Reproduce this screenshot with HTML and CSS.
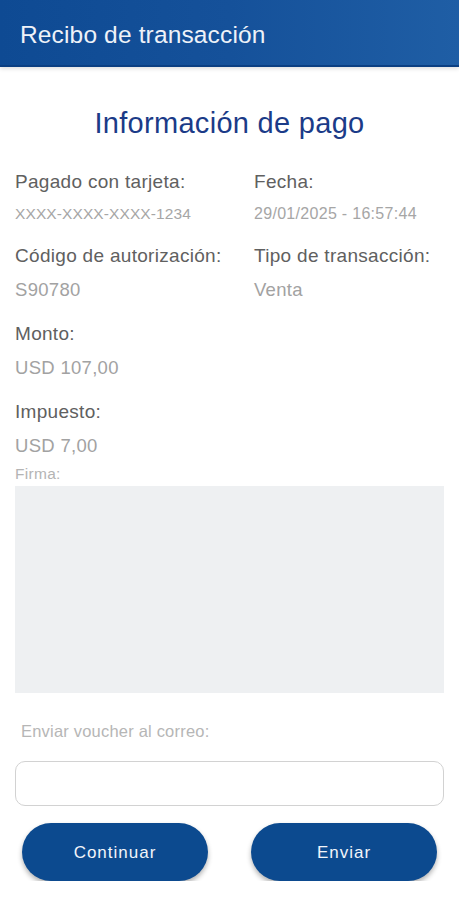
FILE: index.html
```html
<!DOCTYPE html>
<html lang="es">
<head>
<meta charset="utf-8">
<title>Recibo de transacción</title>
<link rel="stylesheet" href="styles.css">
</head>
<body>
<header class="appbar">
  <h1 class="appbar-title">Recibo de transacción</h1>
</header>
<main class="content">
  <h2 class="heading">Información de pago</h2>
  <section class="fields">
    <div class="field">
      <div class="label">Pagado con tarjeta:</div>
      <div class="value small">XXXX-XXXX-XXXX-1234</div>
    </div>
    <div class="field">
      <div class="label">Fecha:</div>
      <div class="value small date">29/01/2025 - 16:57:44</div>
    </div>
    <div class="field">
      <div class="label">Código de autorización:</div>
      <div class="value">S90780</div>
    </div>
    <div class="field">
      <div class="label">Tipo de transacción:</div>
      <div class="value">Venta</div>
    </div>
    <div class="field full">
      <div class="label">Monto:</div>
      <div class="value">USD 107,00</div>
    </div>
    <div class="field full">
      <div class="label">Impuesto:</div>
      <div class="value">USD 7,00</div>
    </div>
  </section>
  <div class="firma-label">Firma:</div>
  <div class="firma-box"></div>
  <div class="mail-label">Enviar voucher al correo:</div>
  <input class="mail-input" type="email" aria-label="Correo">
  <div class="actions">
    <button class="btn">Continuar</button>
    <button class="btn">Enviar</button>
  </div>
</main>
</body>
</html>
```
FILE: styles.css
```css
* { box-sizing: border-box; }
html, body {
  margin: 0;
  padding: 0;
  background: #ffffff;
  font-family: "Liberation Sans", Arial, sans-serif;
}
.appbar {
  height: 67px;
  padding: 4px 0 0 20px;
  display: flex;
  align-items: center;
  background: linear-gradient(90deg, #0e4a93 0%, #15519a 50%, #1f5ea5 100%);
  border-bottom: 2px solid #0b3f82;
  box-shadow: 0 2px 4px rgba(0, 0, 0, 0.12);
}
.appbar-title {
  margin: 0;
  font-weight: normal;
  font-size: 24.5px;
  letter-spacing: 0.15px;
  color: #eef2f8;
  line-height: 30px;
}
.content {
  padding: 0 15px;
}
.heading {
  margin: 38px 0 0;
  text-align: center;
  font-weight: normal;
  font-size: 29px;
  letter-spacing: 0.3px;
  line-height: 36px;
  color: #1b3b88;
}
.fields {
  margin-top: 29px;
  display: grid;
  grid-template-columns: 239px 1fr;
  row-gap: 20px;
}
.field.full {
  grid-column: 1 / 3;
}
.label {
  font-size: 19px;
  letter-spacing: 0.3px;
  line-height: 24px;
  color: #606060;
}
.value {
  margin-top: 10px;
  font-size: 18.5px;
  letter-spacing: 0.3px;
  line-height: 24px;
  color: #a2a2a2;
}
.value.small {
  font-size: 15.5px;
  letter-spacing: 0.1px;
  line-height: 20px;
  color: #a6a6a6;
}
.value.small.date {
  font-size: 16px;
  letter-spacing: 0.3px;
}
.firma-label {
  margin-top: 7px;
  font-size: 15.5px;
  letter-spacing: 0.3px;
  line-height: 18px;
  color: #b4b4b4;
}
.firma-box {
  margin-top: 3px;
  height: 207px;
  background: #eef0f2;
}
.mail-label {
  margin-top: 28px;
  padding-left: 6px;
  font-size: 16.5px;
  letter-spacing: 0.2px;
  line-height: 20px;
  color: #b6b6b6;
}
.mail-input {
  display: block;
  margin-top: 20px;
  width: 100%;
  height: 45px;
  border: 1px solid #d2d2d2;
  border-radius: 10px;
  background: #ffffff;
  outline: none;
}
.actions {
  margin-top: 17px;
  padding: 0 7px;
  display: flex;
  justify-content: space-between;
}
.btn {
  width: 186px;
  height: 58px;
  padding-top: 2px;
  border: none;
  border-radius: 29px;
  background: #0c4a8f;
  color: #f2f5fa;
  font-family: "Liberation Sans", Arial, sans-serif;
  font-size: 17px;
  letter-spacing: 1px;
  box-shadow: 0 3px 5px rgba(0, 0, 0, 0.3);
}
```
